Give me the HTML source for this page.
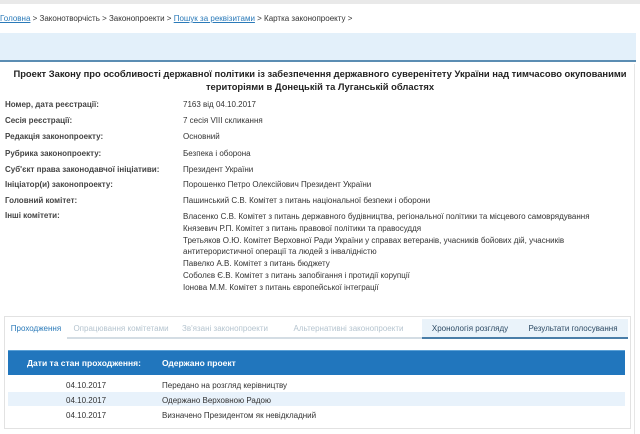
<!DOCTYPE html>
<html><head><meta charset="utf-8"><style>
*{margin:0;padding:0;box-sizing:border-box}
body{width:640px;height:434px;overflow:hidden;background:#fff;font-family:"Liberation Sans",Arial,sans-serif;font-size:8px;color:#333;position:relative}
.a{position:absolute;white-space:nowrap}
.l{font-weight:bold;color:#444}
a{color:#2a7ab9;text-decoration:underline}
.tab{position:absolute;top:319px;height:20px;line-height:19px;text-align:center;font-size:8px;color:#b5c4cf;border-bottom:2px solid #d4dde4}
</style></head><body>
<div class="a" style="left:0;top:0;width:640px;height:4px;background:#e9e9e9"></div>
<div class="a" style="left:0;top:14px;color:#333"><a>Головна</a> &gt; Законотворчість &gt; Законопроекти &gt; <a>Пошук за реквізитами</a> &gt; Картка законопроекту &gt;</div>
<div class="a" style="left:0;top:33px;width:636px;height:29px;background:#e3f0fa;border-bottom:2px solid #5b8db3"></div>
<div class="a" style="left:634px;top:64px;width:1px;height:370px;background:#e6e6e6"></div>
<div class="a" style="left:0;top:67px;width:640px;text-align:center;font-weight:bold;font-size:9.4px;line-height:13px;color:#222;white-space:normal">Проект Закону про особливості державної політики із забезпечення державного суверенітету України над тимчасово окупованими<br>територіями в Донецькій та Луганській областях</div>

<div class="a l" style="left:5px;top:100px">Номер, дата реєстрації:</div><div class="a" style="left:183px;top:100px">7163 від 04.10.2017</div>
<div class="a l" style="left:5px;top:116px">Сесія реєстрації:</div><div class="a" style="left:183px;top:116px">7 сесія VIII скликання</div>
<div class="a l" style="left:5px;top:132px">Редакція законопроекту:</div><div class="a" style="left:183px;top:132px">Основний</div>
<div class="a l" style="left:5px;top:149px">Рубрика законопроекту:</div><div class="a" style="left:183px;top:149px">Безпека і оборона</div>
<div class="a l" style="left:5px;top:165px">Суб'єкт права законодавчої ініціативи:</div><div class="a" style="left:183px;top:165px">Президент України</div>
<div class="a l" style="left:5px;top:180px">Ініціатор(и) законопроекту:</div><div class="a" style="left:183px;top:180px">Порошенко Петро Олексійович Президент України</div>
<div class="a l" style="left:5px;top:196px">Головний комітет:</div><div class="a" style="left:183px;top:196px">Пашинський С.В. Комітет з питань національної безпеки і оборони</div>
<div class="a l" style="left:5px;top:211px">Інші комітети:</div>
<div class="a" style="left:183px;top:211px;line-height:11.8px">Власенко С.В. Комітет з питань державного будівництва, регіональної політики та місцевого самоврядування<br>Князевич Р.П. Комітет з питань правової політики та правосуддя<br>Третьяков О.Ю. Комітет Верховної Ради України у справах ветеранів, учасників бойових дій, учасників<br>антитерористичної операції та людей з інвалідністю<br>Павелко А.В. Комітет з питань бюджету<br>Соболєв Є.В. Комітет з питань запобігання і протидії корупції<br>Іонова М.М. Комітет з питань європейської інтеграції</div>

<div class="a" style="left:4px;top:316px;width:627px;height:113px;border:1px solid #e2e2e2"></div>
<div class="tab" style="left:5px;width:62px;color:#2a7ab9;border-bottom:none;background:#fff">Проходження</div>
<div class="tab" style="left:67px;width:108px">Опрацювання комітетами</div>
<div class="tab" style="left:175px;width:100px">Зв'язані законопроекти</div>
<div class="tab" style="left:275px;width:147px">Альтернативні законопроекти</div>
<div class="tab" style="left:422px;width:96px;color:#2c4a64;background:#eaf3fa;border-bottom-color:#4a7ea8">Хронологія розгляду</div>
<div class="tab" style="left:518px;width:110px;color:#2c4a64;background:#eaf3fa;border-bottom-color:#4a7ea8">Результати голосування</div>

<div class="a" style="left:8px;top:350px;width:617px;height:25px;background:#2176bd;border-top:1px solid #5aa0d6"></div>
<div class="a" style="left:27px;top:358px;color:#fff;font-weight:bold;font-size:8.5px">Дати та стан проходження:</div>
<div class="a" style="left:162px;top:358px;color:#fff;font-weight:bold;font-size:8.5px">Одержано проект</div>
<div class="a" style="left:8px;top:392px;width:617px;height:14px;background:#e8f2fb"></div>
<div class="a" style="left:66px;top:381px">04.10.2017</div><div class="a" style="left:162px;top:381px">Передано на розгляд керівництву</div>
<div class="a" style="left:66px;top:396px">04.10.2017</div><div class="a" style="left:162px;top:396px">Одержано Верховною Радою</div>
<div class="a" style="left:66px;top:411px">04.10.2017</div><div class="a" style="left:162px;top:411px">Визначено Президентом як невідкладний</div>
</body></html>
